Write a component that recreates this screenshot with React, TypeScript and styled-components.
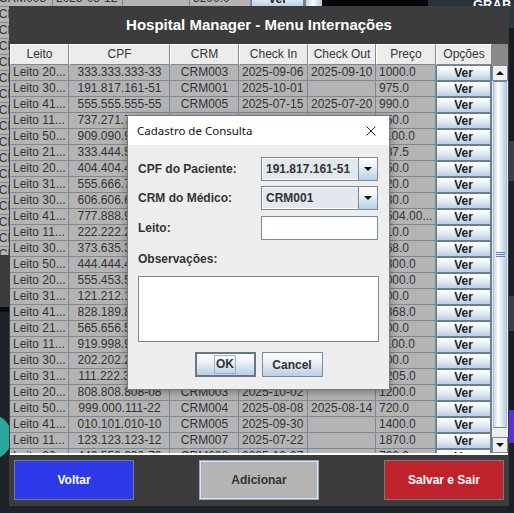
import styled, { createGlobalStyle } from 'styled-components';

const GlobalStyle = createGlobalStyle`
  html, body {
    margin: 0;
    padding: 0;
  }
  body {
    width: 514px;
    height: 513px;
    overflow: hidden;
    background: #1d2127;
    font-family: "Liberation Sans", Arial, sans-serif;
  }
`;

const GRID = '#7a8a99';
const METAL = 'linear-gradient(to bottom, #ffffff 0%, #eef3f9 35%, #d6e2ee 65%, #b8cfe5 100%)';

type Row = [string, string, string, string, string, string];

const rows: Row[] = [
  ['Leito 20...', '333.333.333-33', 'CRM003', '2025-09-06', '2025-09-10', '1000.0'],
  ['Leito 30...', '191.817.161-51', 'CRM001', '2025-10-01', '', '975.0'],
  ['Leito 41...', '555.555.555-55', 'CRM005', '2025-07-15', '2025-07-20', '990.0'],
  ['Leito 11...', '737.271.717-27', 'CRM002', '2025-08-03', '2025-08-06', '850.0'],
  ['Leito 50...', '909.090.909-09', 'CRM006', '2025-09-12', '', '1100.0'],
  ['Leito 21...', '333.444.555-66', 'CRM004', '2025-07-28', '2025-08-02', '887.5'],
  ['Leito 20...', '404.404.404-04', 'CRM003', '2025-10-05', '', '650.0'],
  ['Leito 31...', '555.666.777-88', 'CRM007', '2025-08-19', '', '720.0'],
  ['Leito 30...', '606.606.606-06', 'CRM002', '2025-09-21', '2025-09-25', '930.0'],
  ['Leito 41...', '777.888.999-00', 'CRM005', '2025-08-11', '2025-08-18', '1504.00...'],
  ['Leito 11...', '222.222.222-22', 'CRM001', '2025-07-30', '', '810.0'],
  ['Leito 30...', '373.635.373-63', 'CRM008', '2025-09-02', '', '768.0'],
  ['Leito 50...', '444.444.444-44', 'CRM006', '2025-10-08', '', '1300.0'],
  ['Leito 20...', '555.453.555-45', 'CRM003', '2025-08-25', '2025-08-29', '1000.0'],
  ['Leito 31...', '121.212.121-21', 'CRM004', '2025-09-14', '', '900.0'],
  ['Leito 41...', '828.189.828-18', 'CRM007', '2025-07-19', '2025-07-24', '1368.0'],
  ['Leito 21...', '565.656.565-65', 'CRM002', '2025-09-27', '', '800.0'],
  ['Leito 11...', '919.998.919-99', 'CRM001', '2025-08-14', '', '1100.0'],
  ['Leito 30...', '202.202.202-20', 'CRM005', '2025-10-03', '', '600.0'],
  ['Leito 31...', '111.222.333-44', 'CRM006', '2025-09-09', '2025-09-13', '1205.0'],
  ['Leito 20...', '808.808.808-08', 'CRM003', '2025-10-02', '', '1200.0'],
  ['Leito 50...', '999.000.111-22', 'CRM004', '2025-08-08', '2025-08-14', '720.0'],
  ['Leito 41...', '010.101.010-10', 'CRM005', '2025-09-30', '', '1400.0'],
  ['Leito 11...', '123.123.123-12', 'CRM007', '2025-07-22', '', '1870.0'],
  ['Leito 20...', '440.550.330-70', 'CRM008', '2025-10-07', '', '700.0'],
];

const backRows = [
  ['CRM008', '2025-08-12', '', '3200.0'],
  ['CRM002', '2025-09-01', '2025-09-04', '850.0'],
  ['CRM004', '2025-07-11', '', '640.0'],
  ['CRM001', '2025-08-20', '2025-08-22', '1120.0'],
  ['CRM006', '2025-09-18', '', '990.0'],
  ['CRM003', '2025-10-04', '', '780.0'],
  ['CRM005', '2025-07-26', '2025-07-30', '1500.0'],
  ['CRM007', '2025-08-29', '', '700.0'],
  ['CRM002', '2025-09-15', '', '860.0'],
  ['CRM008', '2025-10-09', '', '1250.0'],
  ['CRM001', '2025-07-17', '2025-07-21', '930.0'],
  ['CRM004', '2025-08-06', '', '610.0'],
  ['CRM006', '2025-09-23', '', '1040.0'],
  ['CRM003', '2025-10-01', '', '890.0'],
  ['CRM005', '2025-08-13', '', '720.0'],
  ['CRM007', '2025-09-05', '', '1180.0'],
  ['CRM002', '2025-07-24', '', '990.0'],
];

const COLS = '59px 101px 69px 69px 68px 60px 56px';

/* ---------- desktop ---------- */

const Desktop = styled.div`
  position: relative;
  width: 514px;
  height: 513px;
  overflow: hidden;
  background: #1e232a;
`;

const BackWindow = styled.div`
  position: absolute;
  left: -8px;
  top: -9px;
  width: 330px;
  height: 264px;
  background: #b4b4b4;
  display: flex;
`;

const BackTable = styled.div`
  width: 313px;
  display: flex;
  flex-direction: column;
`;

const BackRowLine = styled.div`
  display: grid;
  grid-template-columns: 61px 70px 67px 61px 54px;
  height: 16px;
`;

const BackScroll = styled.div`
  width: 17px;
  background: linear-gradient(to right, #b8cfe5, #ffffff 40%, #d6e2ee 70%, #b8cfe5);
  border-left: 1px solid ${GRID};
`;

const LeftShade = styled.div`
  position: absolute;
  left: 0;
  top: 255px;
  width: 9px;
  height: 52px;
  background: #3a3b3d;
  border-bottom: 5px solid #0c0d10;
`;

const TealBlob = styled.div`
  position: absolute;
  left: -34px;
  top: 414px;
  width: 46px;
  height: 46px;
  border-radius: 50%;
  background: #2aa79b;
`;

const TopRight = styled.div`
  position: absolute;
  left: 322px;
  top: 0;
  width: 192px;
  height: 6px;
  display: grid;
  grid-template-columns: 106px 1fr;
`;

const BlackPane = styled.div`
  background: #050608;
`;

const BluePane = styled.div`
  background: #26323e;
  color: #fff;
  font-weight: 700;
  font-size: 13px;
  line-height: 10px;
  padding-left: 45px;
  overflow: hidden;
`;

const RightStrip = styled.div`
  position: absolute;
  left: 509px;
  top: 6px;
  width: 5px;
  height: 507px;
  background: linear-gradient(
    to bottom,
    #2a3744 0px,
    #2a3744 22px,
    #161c22 22px,
    #161c22 135px,
    #3b4048 135px,
    #3b4048 175px,
    #1a2027 175px,
    #1a2027 290px,
    #3a3f47 290px,
    #3a3f47 325px,
    #171c22 325px,
    #171c22 404px,
    #5b2ee6 404px,
    #5b2ee6 437px,
    #1b2027 437px
  );
`;

/* ---------- main window ---------- */

const MainWindow = styled.div`
  position: absolute;
  left: 9px;
  top: 6px;
  width: 500px;
  height: 500px;
  background: #3c3c3c;
  display: flex;
  flex-direction: column;
`;

const TitleBar = styled.div`
  height: 38px;
  display: flex;
  align-items: center;
  justify-content: center;
  color: #ffffff;
  font-weight: 700;
  font-size: 15px;
`;

const TablePane = styled.div`
  margin: 0 1px 0 1px;
  height: 410px;
  display: flex;
  border-bottom: 2px solid #ffffff;
  overflow: hidden;
`;

const Table = styled.div`
  width: 482px;
  display: flex;
  flex-direction: column;
  background: #b4b4b4;
`;

const HeaderRow = styled.div`
  display: grid;
  grid-template-columns: ${COLS};
  height: 21px;
  flex-shrink: 0;
`;

const HeaderCell = styled.div`
  box-sizing: border-box;
  background: #ececec;
  border-top: 1px solid #ffffff;
  border-left: 1px solid #ffffff;
  border-right: 1px solid ${GRID};
  border-bottom: 1px solid ${GRID};
  font-size: 12px;
  color: #333333;
  text-align: center;
  line-height: 19px;
`;

const BodyRow = styled.div`
  display: grid;
  grid-template-columns: ${COLS};
  height: 16px;
  flex-shrink: 0;
`;

const Cell = styled.div<{ $align?: 'left' | 'center' }>`
  box-sizing: border-box;
  border-right: 1px solid ${GRID};
  border-bottom: 1px solid ${GRID};
  padding: 0 2px 0 3px;
  font-size: 12px;
  line-height: 15px;
  color: #333333;
  white-space: nowrap;
  overflow: hidden;
  text-align: ${(p) => p.$align || 'left'};
`;

const OptionCell = styled.div`
  box-sizing: border-box;
  background: #6e7e8e;
  padding: 1px 2px 1px 1px;
  display: flex;
`;

const VerButton = styled.div`
  flex: 1;
  background: ${METAL};
  font-weight: 700;
  font-size: 12px;
  line-height: 14px;
  color: #222222;
  text-align: center;
`;

const ScrollBar = styled.div`
  width: 16px;
  display: flex;
  flex-direction: column;
  background: #eeeeee;
`;

const ScrollCorner = styled.div`
  height: 21px;
  background: #8a8a8a;
`;

const ArrowButton = styled.div`
  box-sizing: border-box;
  height: 16px;
  border: 1px solid ${GRID};
  background: #eeeeee;
  display: flex;
  align-items: center;
  justify-content: center;
`;

const Track = styled.div`
  flex: 1;
  display: flex;
  flex-direction: column;
  padding: 0 1px;
`;

const Thumb = styled.div`
  box-sizing: border-box;
  height: 347px;
  border-top: 1px solid #6382bf;
  border-bottom: 1px solid #6382bf;
  border-left: 1px solid #a8bcd2;
  border-right: 1px solid #a8bcd2;
  background: linear-gradient(to right, #c6d8ea, #ffffff 35%, #dde8f3 65%, #b8cfe5);
  display: flex;
  flex-direction: column;
  align-items: center;
  justify-content: center;
  gap: 1px;
`;

const GripLine = styled.div`
  width: 9px;
  height: 1px;
  background: #6382bf;
`;

const Footer = styled.div`
  flex: 1;
  display: flex;
  justify-content: space-between;
  padding: 5px 5px 6px 5px;
`;

const ActionButton = styled.div<{ $bg: string; $fg: string; $border: string }>`
  box-sizing: border-box;
  width: 120px;
  height: 40px;
  background: ${(p) => p.$bg};
  color: ${(p) => p.$fg};
  border: 1px solid ${(p) => p.$border};
  font-weight: 700;
  font-size: 12px;
  display: flex;
  align-items: center;
  justify-content: center;
`;

const SoftButton = styled(ActionButton)`
  box-shadow: inset 0 0 0 1px #dce7f2;
`;

/* ---------- dialog ---------- */

const Dialog = styled.div`
  position: absolute;
  left: 127px;
  top: 115px;
  width: 263px;
  height: 275px;
  box-sizing: border-box;
  border: 1px solid #7c7c7c;
  box-shadow: 0 2px 8px rgba(0, 0, 0, 0.35);
  background: #eeeeee;
  display: flex;
  flex-direction: column;
`;

const DialogTitle = styled.div`
  height: 29px;
  flex-shrink: 0;
  background: #ffffff;
  display: flex;
  align-items: center;
  padding: 0 9px 0 9px;
  font-family: "Noto Sans", "Liberation Sans", sans-serif;
  font-size: 11.5px;
  color: #111111;
`;

const CloseIcon = styled.svg`
  margin-left: auto;
  margin-right: 4px;
`;

const DialogBody = styled.div`
  padding: 12px 10px 0 10px;
  display: flex;
  flex-direction: column;
  align-items: stretch;
`;

const FormGrid = styled.div`
  display: grid;
  grid-template-columns: 123px 117px;
  grid-template-rows: 24px 24px 25px;
  row-gap: 5px;
  align-items: end;
`;

const Label = styled.div`
  font-weight: 700;
  font-size: 12px;
  color: #333333;
  align-self: center;
`;

const ObsLabel = styled.div`
  margin: 12px 0 10px 0;
  font-weight: 700;
  font-size: 12px;
  line-height: 14px;
  color: #333333;
`;

const Combo = styled.div`
  box-sizing: border-box;
  height: 24px;
  border: 1px solid ${GRID};
  display: flex;
  background: #e3e8ee;
`;

const ComboValue = styled.div`
  flex: 1;
  border: 1px solid #ffffff;
  border-right: none;
  padding-left: 3px;
  font-weight: 700;
  font-size: 12px;
  line-height: 20px;
  color: #333333;
`;

const ComboArrow = styled.div`
  width: 18px;
  border-left: 1px solid ${GRID};
  background: ${METAL};
  display: flex;
  align-items: center;
  justify-content: center;
`;

const TextField = styled.div<{ $height: number }>`
  box-sizing: border-box;
  height: ${(p) => p.$height}px;
  background: #ffffff;
  border: 1px solid ${GRID};
`;

const ButtonRow = styled.div`
  margin-top: 10px;
  display: flex;
  justify-content: center;
  gap: 6px;
`;

const DialogButton = styled.div<{ $default?: boolean }>`
  box-sizing: border-box;
  width: 61px;
  height: 25px;
  border: ${(p) => (p.$default ? '2px solid #677788' : `1px solid ${GRID}`)};
  background: ${METAL};
  font-weight: 700;
  font-size: 12px;
  color: #333333;
  display: flex;
  align-items: center;
  justify-content: center;
`;

const FocusRing = styled.span`
  border: 1px solid #99b4d1;
  padding: 2px 1px;
  line-height: 13px;
`;

function Triangle({ up }: { up?: boolean }) {
  return (
    <svg width="8" height="4" viewBox="0 0 8 4">
      <path d={up ? 'M0 4 L4 0 L8 4 Z' : 'M0 0 L8 0 L4 4 Z'} fill="#111" />
    </svg>
  );
}

export default function App() {
  return (
    <>
      <GlobalStyle />
      <Desktop>
        <BackWindow>
          <BackTable>
            {backRows.map((r, i) => (
              <BackRowLine key={i}>
                {r.map((c, j) => (
                  <Cell key={j} $align={j === 0 ? 'center' : 'left'}>
                    {c}
                  </Cell>
                ))}
                <OptionCell>
                  <VerButton>Ver</VerButton>
                </OptionCell>
              </BackRowLine>
            ))}
          </BackTable>
          <BackScroll />
        </BackWindow>
        <LeftShade />
        <TealBlob />
        <TopRight>
          <BlackPane />
          <BluePane>GRAB</BluePane>
        </TopRight>
        <RightStrip />

        <MainWindow>
          <TitleBar>Hospital Manager - Menu Internações</TitleBar>
          <TablePane>
            <Table>
              <HeaderRow>
                {['Leito', 'CPF', 'CRM', 'Check In', 'Check Out', 'Preço', 'Opções'].map((h) => (
                  <HeaderCell key={h}>{h}</HeaderCell>
                ))}
              </HeaderRow>
              {rows.map((r, i) => (
                <BodyRow key={i}>
                  <Cell>{r[0]}</Cell>
                  <Cell $align="center">{r[1]}</Cell>
                  <Cell $align="center">{r[2]}</Cell>
                  <Cell>{r[3]}</Cell>
                  <Cell>{r[4]}</Cell>
                  <Cell>{r[5]}</Cell>
                  <OptionCell>
                    <VerButton>Ver</VerButton>
                  </OptionCell>
                </BodyRow>
              ))}
            </Table>
            <ScrollBar>
              <ScrollCorner />
              <ArrowButton>
                <Triangle up />
              </ArrowButton>
              <Track>
                <Thumb>
                  <GripLine />
                  <GripLine />
                  <GripLine />
                </Thumb>
              </Track>
              <ArrowButton>
                <Triangle />
              </ArrowButton>
            </ScrollBar>
          </TablePane>
          <Footer>
            <ActionButton $bg="#2e3ae9" $fg="#ffffff" $border="#6b7b8b">
              Voltar
            </ActionButton>
            <SoftButton $bg="#b4b4b4" $fg="#333333" $border="#8fa9c4">
              Adicionar
            </SoftButton>
            <ActionButton $bg="#c0222c" $fg="#ffffff" $border="#6b7b8b">
              Salvar e Sair
            </ActionButton>
          </Footer>
        </MainWindow>

        <Dialog>
          <DialogTitle>
            Cadastro de Consulta
            <CloseIcon width="10" height="10" viewBox="0 0 10 10">
              <path d="M0.5 0.5 L9.5 9.5 M9.5 0.5 L0.5 9.5" stroke="#222" strokeWidth="1" />
            </CloseIcon>
          </DialogTitle>
          <DialogBody>
            <FormGrid>
              <Label>CPF do Paciente:</Label>
              <Combo>
                <ComboValue>191.817.161-51</ComboValue>
                <ComboArrow>
                  <Triangle />
                </ComboArrow>
              </Combo>
              <Label>CRM do Médico:</Label>
              <Combo>
                <ComboValue>CRM001</ComboValue>
                <ComboArrow>
                  <Triangle />
                </ComboArrow>
              </Combo>
              <Label>Leito:</Label>
              <TextField $height={24} />
            </FormGrid>
            <ObsLabel>Observações:</ObsLabel>
            <TextField $height={66} />
            <ButtonRow>
              <DialogButton $default>
                <FocusRing>OK</FocusRing>
              </DialogButton>
              <DialogButton>Cancel</DialogButton>
            </ButtonRow>
          </DialogBody>
        </Dialog>
      </Desktop>
    </>
  );
}
